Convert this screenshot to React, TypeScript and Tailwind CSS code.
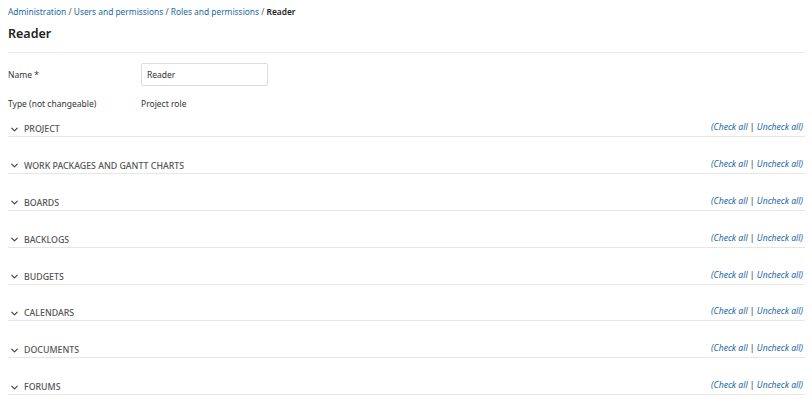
import { ChevronDown } from "lucide-react"

const sections = [
    "Project",
    "Work packages and Gantt charts",
    "Boards",
    "Backlogs",
    "Budgets",
    "Calendars",
    "Documents",
    "Forums",
]

export default function App() {
    return (
        <div className="bg-white min-h-screen pl-2 pr-[7px] text-[#333] font-['Noto_Sans',sans-serif] text-[8.5px]">
            {/* breadcrumb */}
            <div className="pt-[5px] leading-[14px] text-[8.4px]">
                <a className="text-[#1a67a3]">Administration</a>
                <span className="text-[#555]"> / </span>
                <a className="text-[#1a67a3]">Users and permissions</a>
                <span className="text-[#555]"> / </span>
                <a className="text-[#1a67a3]">Roles and permissions</a>
                <span className="text-[#555]"> / </span>
                <span className="font-semibold text-[#222]">Reader</span>
            </div>
            <h1 className="mt-[6px] text-[12.5px] font-semibold leading-[18px] text-[#222] pb-[9px] border-b border-[#ececec]">
                Reader
            </h1>

            <div className="mt-[10px] flex items-center h-[23px]">
                <label className="w-[133px] pt-[2px]">Name *</label>
                <input
                    className="w-[127px] h-[23px] border border-[#dcdcdc] rounded-[2px] px-[5px] text-[8.5px] text-[#333] outline-none"
                    defaultValue="Reader" />
            </div>
            <div className="mt-[6px] flex items-center h-[24px]">
                <span className="w-[133px]">Type (not changeable)</span>
                <span>Project role</span>
            </div>

            <div>
                {sections.map(s => (
                    <div key={s} className="flex items-end justify-between h-[36.9px] border-b border-[#e6e6e6] first:h-[21px]">
                        <div className="flex items-center gap-[4px] text-[#555] font-medium uppercase text-[8.8px] leading-[14px]">
                            <ChevronDown className="w-[11px] h-[11px] ml-[1px] text-[#444]" strokeWidth={2.6} />
                            {s}
                        </div>
                        <div className="italic text-[#1a67a3] mb-[2px] mr-[2px] leading-[14px] text-[8.6px]">
                            (<a>Check all</a>
                            <span className="text-[#333] not-italic"> | </span>
                            <a>Uncheck all</a>)
                        </div>
                    </div>
                ))}
            </div>
        </div>
    )
}
